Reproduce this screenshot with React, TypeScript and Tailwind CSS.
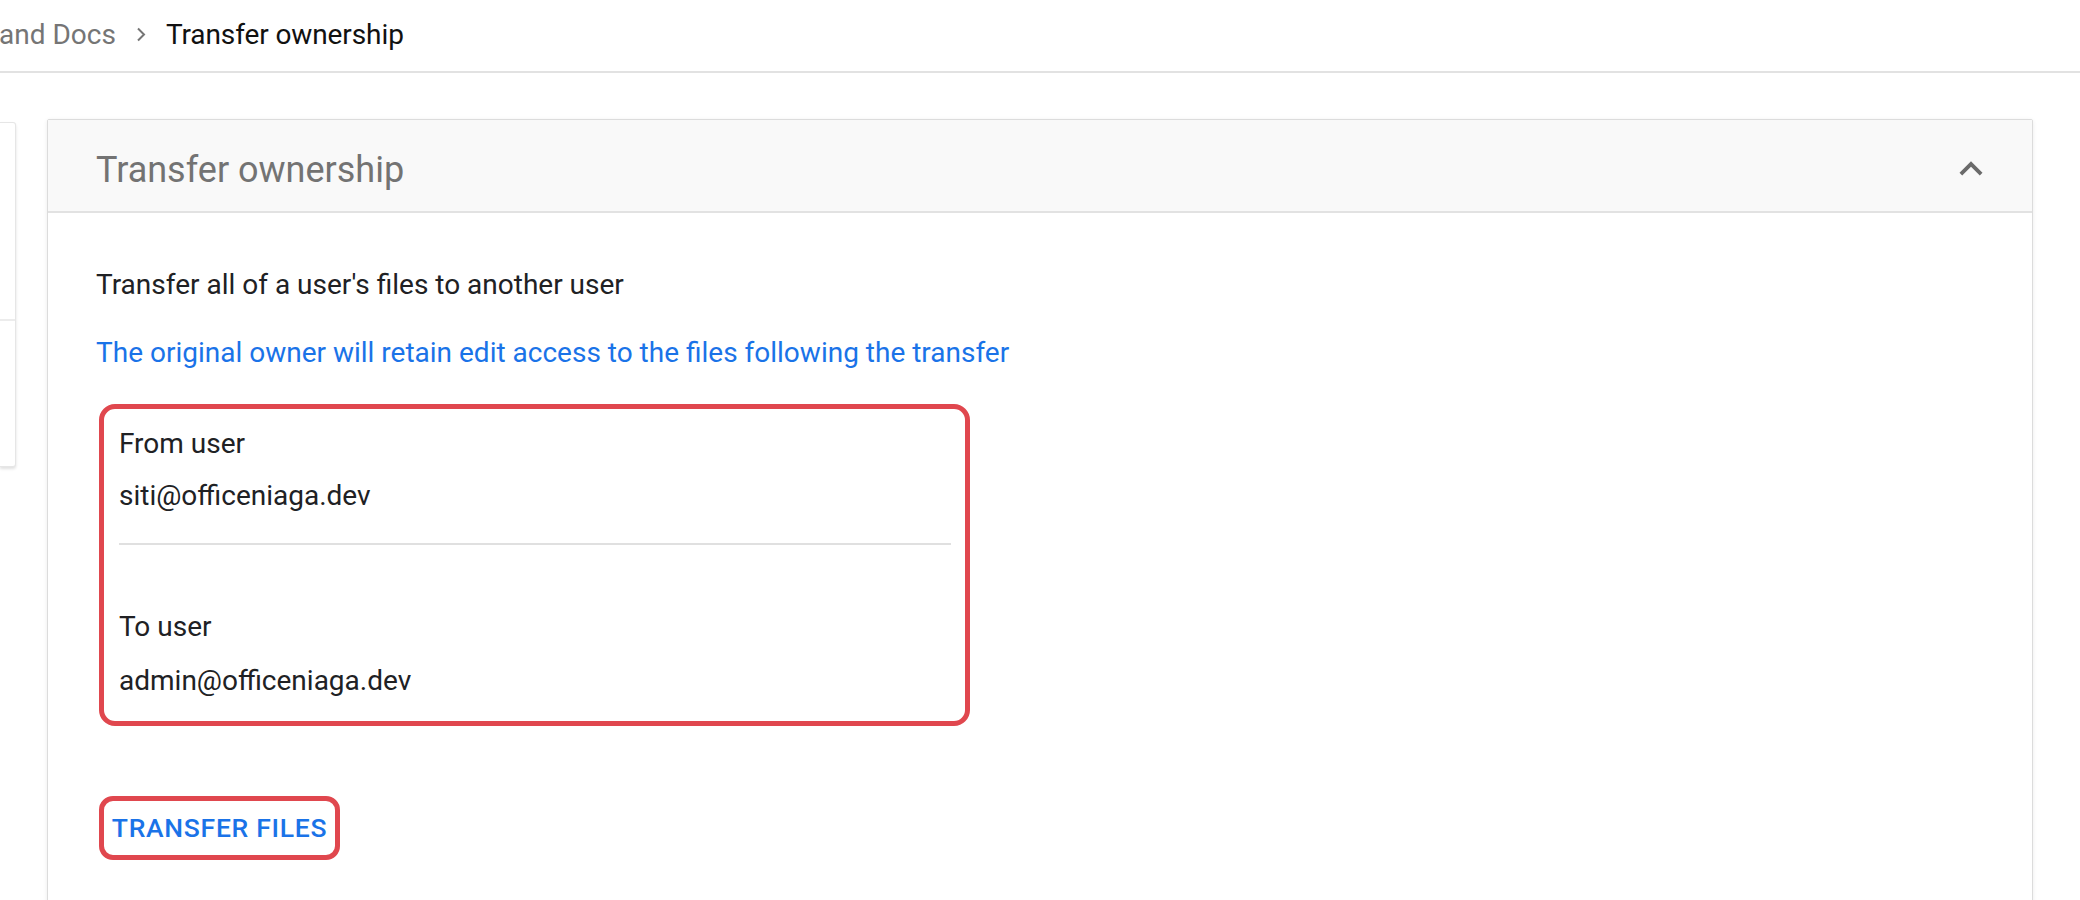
import React from 'react';

// Breadcrumb separator
const Chevron = () => (
    <svg width="10" height="15" viewBox="0 0 10 15" fill="none" className="shrink-0">
        <path d="M2 1.5l6 6-6 6" stroke="#757575" strokeWidth="2" />
    </svg>
);

// Material "expand less" arrow
const ExpandLess = () => (
    <svg width="46" height="46" viewBox="0 0 24 24" fill="#6b6b6b">
        <path d="M7.41 15.41L12 10.83l4.59 4.58L18 14l-6-6-6 6z" />
    </svg>
);

export default function App() {
    return (
        <div className="min-h-[900px] bg-white font-['Roboto','Liberation_Sans',sans-serif] overflow-hidden">
            {/* Top bar with breadcrumb */}
            <div className="h-[73px] border-b-2 border-[#e2e2e2] flex items-center pb-[2px]">
                <div className="flex items-center text-[28px] leading-none">
                    <span className="text-[#757575] -ml-[1px]">and Docs</span>
                    <span className="ml-[20px] mr-[20px] flex items-center"><Chevron /></span>
                    <span className="text-[#111111] tracking-[-0.1px]">Transfer ownership</span>
                </div>
            </div>

            <div className="flex items-start">
                {/* Collapsed side card */}
                <div className="mt-[49px] w-[16px] h-[345px] bg-white rounded-r-[3px] border border-l-0 border-[#e6e6e6] shadow-[0_2px_3px_rgba(0,0,0,0.12)] flex flex-col">
                    <div className="h-[198px] border-b-2 border-[#ececec]" />
                </div>

                {/* Main card */}
                <div className="mt-[46px] ml-[31px] mr-[47px] flex-1 border border-[#dcdcdc] rounded-t-[2px] shadow-[0_1px_4px_rgba(0,0,0,0.08)] bg-white h-[800px]">
                    <div className="h-[93px] bg-[#f9f9f9] border-b-2 border-[#e2e2e2] flex items-center justify-between pl-[48px] pr-[38px]">
                        <h2 className="text-[36px] text-[#737373] font-normal leading-none pt-[8px]">Transfer ownership</h2>
                        <div className="pt-[6px]"><ExpandLess /></div>
                    </div>

                    <div className="pl-[48px] pt-[52px]">
                        <p className="text-[28px] leading-[40px] text-[#202124]">Transfer all of a user's files to another user</p>
                        <p className="mt-[28px] text-[28px] leading-[40px] text-[#1a73e8]">The original owner will retain edit access to the files following the transfer</p>

                        <div className="mt-[31px] ml-[3px] w-[871px] border-[5px] border-[#e0474e] rounded-[16px] pl-[15px] pr-[14px] pt-[15px] pb-[20px] text-[28px] leading-[40px] text-[#202124]">
                            <div>From user</div>
                            <div className="mt-[12px]">siti@officeniaga.dev</div>
                            <div className="mt-[27px] h-[2px] bg-[#e0e0e0]" />
                            <div className="mt-[62px]">To user</div>
                            <div className="mt-[14px]">admin@officeniaga.dev</div>
                        </div>

                        <button className="mt-[70px] ml-[3px] h-[64px] w-[241px] border-[5px] border-[#e0474e] rounded-[14px] flex items-center justify-center text-[26.5px] font-medium tracking-[0.7px] text-[#1a73e8]">
                            TRANSFER FILES
                        </button>
                    </div>
                </div>
            </div>
        </div>
    );
}
